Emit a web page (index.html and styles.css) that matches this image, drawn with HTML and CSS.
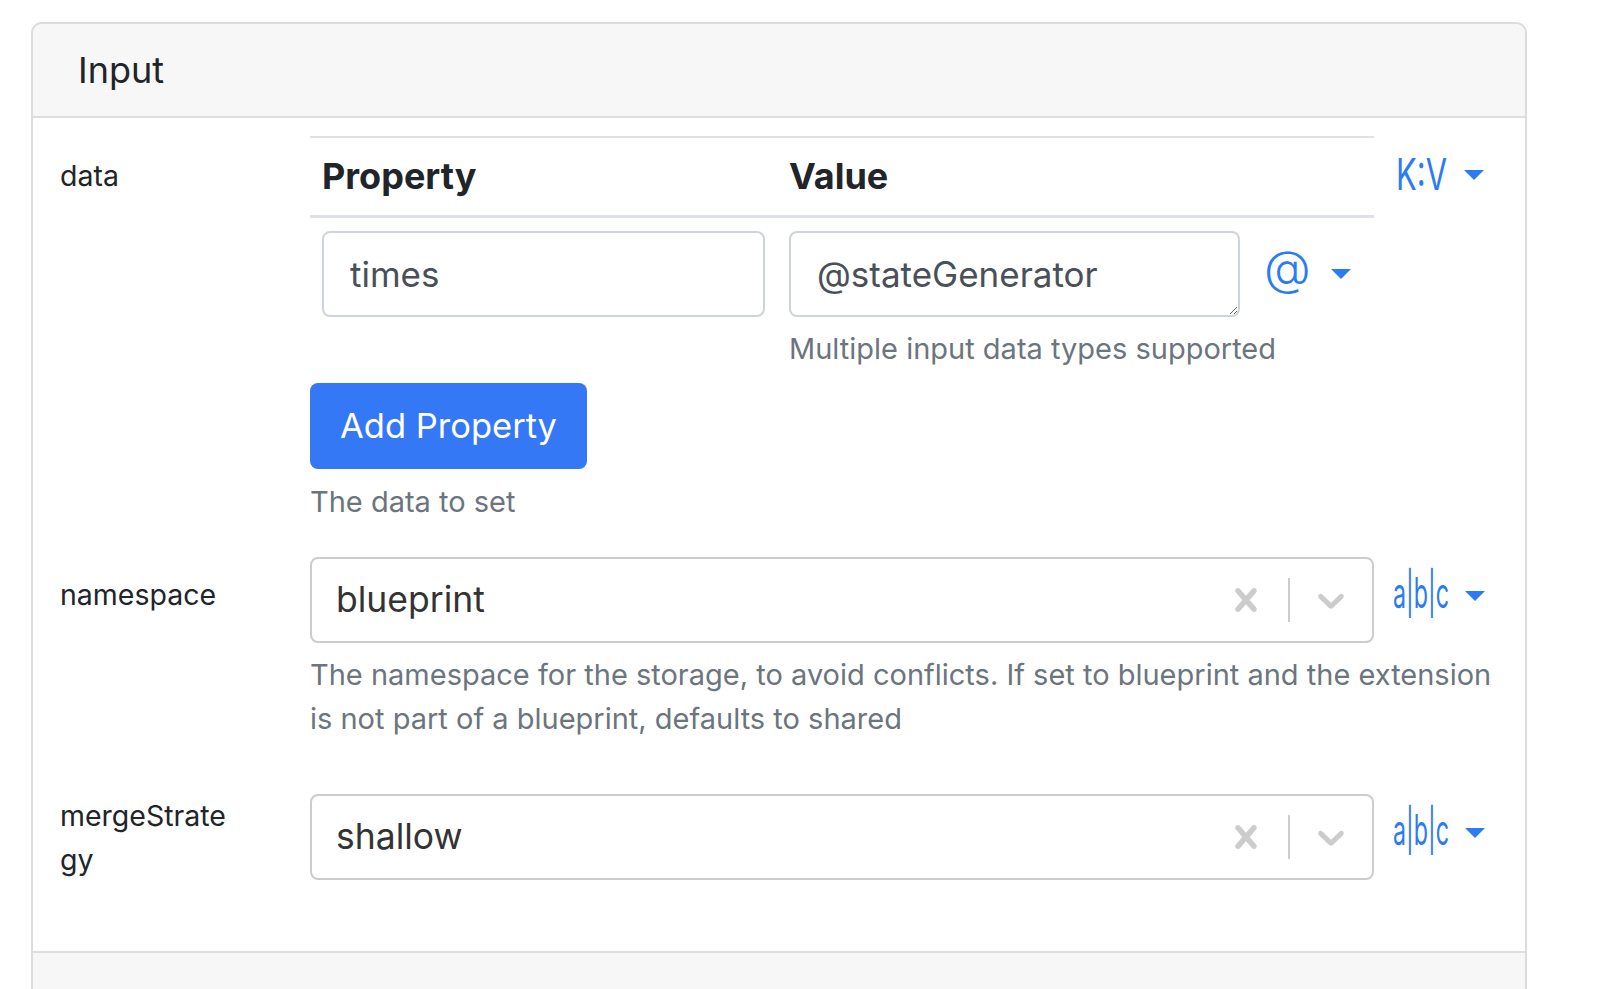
FILE: index.html
```html
<!DOCTYPE html>
<html>
<head>
<meta charset="utf-8">
<link rel="stylesheet" href="styles.css">
</head>
<body>
<div class="card">
  <div class="card-header">Input</div>
  <div class="card-body">
    <div class="row row-data">
      <div class="lbl lbl-data">data</div>
      <div class="field">
        <div class="field-main">
          <div class="control">
            <table class="kv">
              <thead>
                <tr><th class="col-prop">Property</th><th class="col-val">Value</th></tr>
              </thead>
              <tbody>
                <tr>
                  <td class="col-prop"><input class="fc" type="text" value="times"></td>
                  <td class="col-val">
                    <div class="val-line">
                      <textarea class="fc ta" rows="1">@stateGenerator</textarea>
                      <div class="at-toggle">
                        <span class="at">@</span>
                        <span class="caret"></span>
                      </div>
                    </div>
                    <div class="help help-inner">Multiple input data types supported</div>
                  </td>
                </tr>
              </tbody>
            </table>
            <button class="btn">Add Property</button>
          </div>
          <div class="toggle">
            <svg class="kvicon" width="52" height="34" viewBox="0 0 52 34"><text x="0" y="32" textLength="51" lengthAdjust="spacingAndGlyphs">K:V</text></svg>
            <span class="caret"></span>
          </div>
        </div>
        <div class="help help-btn">The data to set</div>
      </div>
    </div>

    <div class="row row-ns">
      <div class="lbl lbl-ns">namespace</div>
      <div class="field">
        <div class="field-main">
          <div class="select">
            <div class="sel-value">blueprint</div>
            <div class="sel-ind">
              <div class="ind ind-clear">
                <svg width="46" height="46" viewBox="0 0 20 20"><path d="M14.348 14.849c-0.469 0.469-1.229 0.469-1.697 0l-2.651-3.030-2.651 3.029c-0.469 0.469-1.229 0.469-1.697 0-0.469-0.469-0.469-1.229 0-1.697l2.758-3.150-2.759-3.152c-0.469-0.469-0.469-1.228 0-1.697s1.228-0.469 1.697 0l2.652 3.031 2.651-3.031c0.469-0.469 1.228-0.469 1.697 0s0.469 1.229 0 1.697l-2.758 3.152 2.758 3.150c0.469 0.469 0.469 1.229 0 1.698z"/></svg>
              </div>
              <span class="sep"></span>
              <div class="ind ind-drop">
                <svg width="44" height="44" viewBox="0 0 20 20"><path d="M4.516 7.548c0.436-0.446 1.043-0.481 1.576 0l3.908 3.747 3.908-3.747c0.533-0.481 1.141-0.446 1.574 0 0.436 0.445 0.408 1.197 0 1.615-0.406 0.418-4.695 4.502-4.695 4.502-0.217 0.223-0.502 0.335-0.787 0.335s-0.57-0.112-0.789-0.335c0 0-4.287-4.084-4.695-4.502s-0.436-1.17 0-1.615z"/></svg>
              </div>
            </div>
          </div>
          <div class="toggle toggle-sel">
            <svg class="abcicon" width="58" height="44" viewBox="0 0 58 44"><text x="0" y="34" textLength="56" lengthAdjust="spacingAndGlyphs">a|b|c</text></svg>
            <span class="caret"></span>
          </div>
        </div>
        <div class="help help-sel">The namespace for the storage, to avoid conflicts. If set to blueprint and the extension is not part of a blueprint, defaults to shared</div>
      </div>
    </div>

    <div class="row row-ms">
      <div class="lbl lbl-ms">mergeStrategy</div>
      <div class="field">
        <div class="field-main">
          <div class="select">
            <div class="sel-value">shallow</div>
            <div class="sel-ind">
              <div class="ind ind-clear">
                <svg width="46" height="46" viewBox="0 0 20 20"><path d="M14.348 14.849c-0.469 0.469-1.229 0.469-1.697 0l-2.651-3.030-2.651 3.029c-0.469 0.469-1.229 0.469-1.697 0-0.469-0.469-0.469-1.229 0-1.697l2.758-3.150-2.759-3.152c-0.469-0.469-0.469-1.228 0-1.697s1.228-0.469 1.697 0l2.652 3.031 2.651-3.031c0.469-0.469 1.228-0.469 1.697 0s0.469 1.229 0 1.697l-2.758 3.152 2.758 3.150c0.469 0.469 0.469 1.229 0 1.698z"/></svg>
              </div>
              <span class="sep"></span>
              <div class="ind ind-drop">
                <svg width="44" height="44" viewBox="0 0 20 20"><path d="M4.516 7.548c0.436-0.446 1.043-0.481 1.576 0l3.908 3.747 3.908-3.747c0.533-0.481 1.141-0.446 1.574 0 0.436 0.445 0.408 1.197 0 1.615-0.406 0.418-4.695 4.502-4.695 4.502-0.217 0.223-0.502 0.335-0.787 0.335s-0.57-0.112-0.789-0.335c0 0-4.287-4.084-4.695-4.502s-0.436-1.17 0-1.615z"/></svg>
              </div>
            </div>
          </div>
          <div class="toggle toggle-sel">
            <svg class="abcicon" width="58" height="44" viewBox="0 0 58 44"><text x="0" y="34" textLength="56" lengthAdjust="spacingAndGlyphs">a|b|c</text></svg>
            <span class="caret"></span>
          </div>
        </div>
      </div>
    </div>
  </div>
  <div class="card-footer"></div>
</div>
</body>
</html>
```

FILE: styles.css
```css
* { box-sizing: border-box; }
html, body { margin: 0; padding: 0; background: #fff; }
body {
  font-family: Inter, "Noto Sans", "Liberation Sans", sans-serif;
  color: #212529;
  overflow: hidden;
  height: 989px;
}
.card {
  margin: 22px 0 0 31px;
  width: 1496px;
  border: 2px solid #dcdcdc;
  border-radius: 11px;
  overflow: hidden;
}
.card-header {
  height: 94px;
  background: #f7f7f7;
  border-bottom: 2px solid #dedede;
  padding-left: 45px;
  font-size: 36px;
  line-height: 92px;
  color: #212529;
}
.card-body {
  padding: 18px 27px 69px 27px;
}
.row {
  display: grid;
  grid-template-columns: 176px 1fr;
  column-gap: 74px;
}
.row-data { margin-bottom: 33px; }
.row-ns { margin-bottom: 53px; }
.lbl {
  font-size: 28.5px;
  line-height: 44px;
  color: #212529;
  word-break: break-all;
}
.lbl-data { padding-top: 18px; }
.lbl-ns { padding-top: 16px; }
.lbl-ms { padding-top: 0; }
.field { min-width: 0; }
.field-main {
  display: flex;
  align-items: flex-start;
}
.control { flex: 1; min-width: 0; }
.toggle {
  width: 124px;
  height: 78px;
  padding-left: 22px;
  display: flex;
  align-items: center;
  flex: none;
}
.toggle-sel { height: 78px; padding-left: 19px; }
.toggle svg { overflow: visible; flex: none; }
.kvicon text, .abcicon text {
  fill: #2b7bf4;
  font-family: Inter, "Liberation Sans", sans-serif;
  font-size: 44px;
}
.abcicon text { font-size: 42px; }
.caret {
  display: inline-block;
  flex: none;
  width: 0;
  height: 0;
  border-left: 10px solid transparent;
  border-right: 10px solid transparent;
  border-top: 10px solid #2b7bf4;
  margin-left: 16px;
}
.toggle-sel .caret { margin-left: 14px; }
.kv {
  width: 100%;
  border-collapse: collapse;
  table-layout: fixed;
}
.kv th {
  text-align: left;
  font-weight: 700;
  font-size: 36px;
  height: 79px;
  padding: 0 12px;
  border-top: 2px solid #dee2e6;
  border-bottom: 3px solid #dee2e6;
  color: #212529;
}
.kv th.col-prop, .kv td.col-prop { width: 467px; }
.kv td {
  padding: 13px 12px 0 12px;
  vertical-align: top;
}
.fc {
  display: block;
  width: 100%;
  height: 86px;
  border: 2px solid #ced4da;
  border-radius: 8px;
  padding: 0 26px;
  font-family: Inter, "Liberation Sans", sans-serif;
  font-size: 35px;
  color: #495057;
  background: #fff;
  outline: none;
}
.ta {
  width: 451px;
  flex: none;
  resize: vertical;
  padding-top: 20px;
  line-height: 42px;
  overflow: hidden;
}
.val-line {
  display: flex;
  align-items: center;
}
.at-toggle {
  display: flex;
  align-items: center;
  padding-left: 24px;
}
.at {
  font-size: 48px;
  font-weight: 300;
  color: #2b7bf4;
  line-height: 1;
  position: relative;
  top: -6px;
}
.at-toggle .caret { margin-left: 20px; }
.help {
  font-size: 29px;
  line-height: 44px;
  color: #6c757d;
}
.help-inner { margin-top: 10px; }
.help-btn { margin-top: 11px; }
.help-sel { margin-top: 10px; }
.btn {
  display: block;
  margin-top: 12px;
  height: 86px;
  padding: 0 30px;
  border: none;
  border-radius: 8px;
  background: #3478f6;
  color: #fff;
  font-family: Inter, "Liberation Sans", sans-serif;
  font-size: 34.5px;
}
.select {
  flex: 1;
  height: 86px;
  border: 2px solid #cccccc;
  border-radius: 8px;
  display: flex;
  align-items: center;
  min-width: 0;
}
.sel-value {
  flex: 1;
  padding-left: 24px;
  font-size: 35.5px;
  color: #333;
}
.sel-ind {
  display: flex;
  align-items: center;
  height: 100%;
}
.ind {
  display: flex;
  align-items: center;
  justify-content: center;
}
.ind svg { fill: #cccccc; display: block; }
.ind-clear { width: 66px; margin-right: 9px; }
.sep {
  width: 2px;
  height: 44px;
  background: #cccccc;
}
.ind-drop { width: 82px; }
.card-footer {
  height: 60px;
  background: #f7f7f7;
  border-top: 2px solid #dedede;
}
```
